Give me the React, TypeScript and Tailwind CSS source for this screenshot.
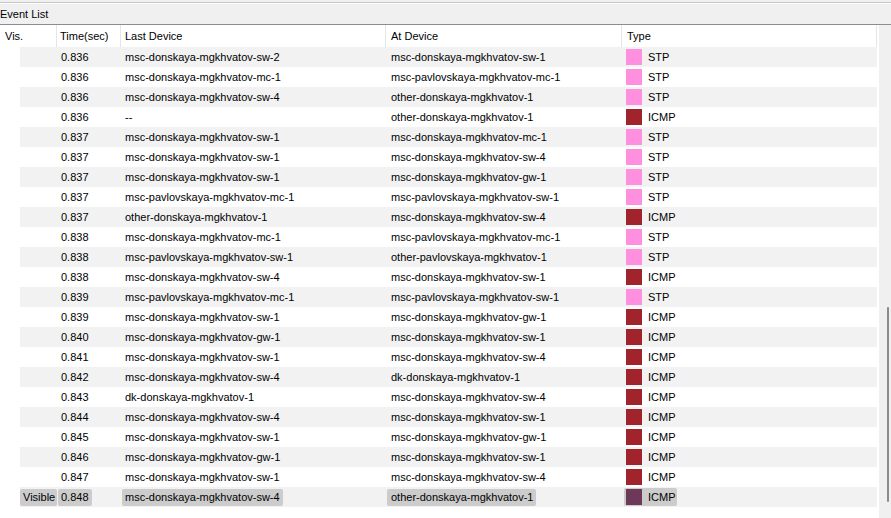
const rows = [
  ['0.836', 'msc-donskaya-mgkhvatov-sw-2', 'msc-donskaya-mgkhvatov-sw-1', 'STP'],
  ['0.836', 'msc-donskaya-mgkhvatov-mc-1', 'msc-pavlovskaya-mgkhvatov-mc-1', 'STP'],
  ['0.836', 'msc-donskaya-mgkhvatov-sw-4', 'other-donskaya-mgkhvatov-1', 'STP'],
  ['0.836', '--', 'other-donskaya-mgkhvatov-1', 'ICMP'],
  ['0.837', 'msc-donskaya-mgkhvatov-sw-1', 'msc-donskaya-mgkhvatov-mc-1', 'STP'],
  ['0.837', 'msc-donskaya-mgkhvatov-sw-1', 'msc-donskaya-mgkhvatov-sw-4', 'STP'],
  ['0.837', 'msc-donskaya-mgkhvatov-sw-1', 'msc-donskaya-mgkhvatov-gw-1', 'STP'],
  ['0.837', 'msc-pavlovskaya-mgkhvatov-mc-1', 'msc-pavlovskaya-mgkhvatov-sw-1', 'STP'],
  ['0.837', 'other-donskaya-mgkhvatov-1', 'msc-donskaya-mgkhvatov-sw-4', 'ICMP'],
  ['0.838', 'msc-donskaya-mgkhvatov-mc-1', 'msc-pavlovskaya-mgkhvatov-mc-1', 'STP'],
  ['0.838', 'msc-pavlovskaya-mgkhvatov-sw-1', 'other-pavlovskaya-mgkhvatov-1', 'STP'],
  ['0.838', 'msc-donskaya-mgkhvatov-sw-4', 'msc-donskaya-mgkhvatov-sw-1', 'ICMP'],
  ['0.839', 'msc-pavlovskaya-mgkhvatov-mc-1', 'msc-pavlovskaya-mgkhvatov-sw-1', 'STP'],
  ['0.839', 'msc-donskaya-mgkhvatov-sw-1', 'msc-donskaya-mgkhvatov-gw-1', 'ICMP'],
  ['0.840', 'msc-donskaya-mgkhvatov-gw-1', 'msc-donskaya-mgkhvatov-sw-1', 'ICMP'],
  ['0.841', 'msc-donskaya-mgkhvatov-sw-1', 'msc-donskaya-mgkhvatov-sw-4', 'ICMP'],
  ['0.842', 'msc-donskaya-mgkhvatov-sw-4', 'dk-donskaya-mgkhvatov-1', 'ICMP'],
  ['0.843', 'dk-donskaya-mgkhvatov-1', 'msc-donskaya-mgkhvatov-sw-4', 'ICMP'],
  ['0.844', 'msc-donskaya-mgkhvatov-sw-4', 'msc-donskaya-mgkhvatov-sw-1', 'ICMP'],
  ['0.845', 'msc-donskaya-mgkhvatov-sw-1', 'msc-donskaya-mgkhvatov-gw-1', 'ICMP'],
  ['0.846', 'msc-donskaya-mgkhvatov-gw-1', 'msc-donskaya-mgkhvatov-sw-1', 'ICMP'],
  ['0.847', 'msc-donskaya-mgkhvatov-sw-1', 'msc-donskaya-mgkhvatov-sw-4', 'ICMP'],
  ['0.848', 'msc-donskaya-mgkhvatov-sw-4', 'other-donskaya-mgkhvatov-1', 'ICMP'],
];

function Sel({ on, children }: { on: boolean; children: React.ReactNode }) {
  return (
    <span className={`inline-flex items-center h-[17px] px-[3px] rounded-[2px] ${on ? 'bg-[#cccccc]' : ''}`}>
      {children}
    </span>
  );
}

export default function App() {
  return (
    <div
      className="w-[891px] h-[518px] overflow-hidden bg-white text-[11px] text-black flex flex-col"
      style={{ fontFamily: '"Liberation Sans", Arial, sans-serif' }}
    >
      <div className="h-[2px] bg-[#f0f0f0]" />
      <div className="h-[1px] bg-[#c6c6c6]" />
      <div className="h-[1px] bg-white" />
      <div className="h-[20px] bg-[#f0f0f0] flex items-center border-b border-[#8a8d94] box-content">
        Event List
      </div>
      <div className="flex flex-1 min-h-0">
        <div className="w-[877px] flex flex-col">
          <div className="h-[22px] flex">
            <div className="w-[57px] pl-[5px] flex items-center border-r border-[#e5e5e5]">Vis.</div>
            <div className="w-[64px] pl-[3px] flex items-center border-r border-[#e5e5e5]">Time(sec)</div>
            <div className="w-[265px] pl-[4px] flex items-center border-r border-[#e5e5e5]">Last Device</div>
            <div className="w-[236px] pl-[5px] flex items-center border-r border-[#e5e5e5]">At Device</div>
            <div className="w-[255px] pl-[5px] flex items-center border-r border-[#e5e5e5]">Type</div>
          </div>
          {rows.map((r, i) => {
            const sel = i === rows.length - 1;
            const icmp = r[3] === 'ICMP';
            return (
              <div key={i} className="h-[20px] flex">
                <div className="w-[20px]" />
                <div className={`flex flex-1 items-center ${i % 2 === 0 ? 'bg-[#f2f2f2]' : ''}`}>
                  <div className="w-[37px] flex items-center">
                    {sel && (
                      <span className="inline-flex items-center h-[17px] w-[37px] pl-[3px] rounded-[2px] bg-[#cccccc]">
                        Visible
                      </span>
                    )}
                  </div>
                  <div className="w-[64px] pl-[1px] flex items-center">
                    <Sel on={sel}>{r[0]}</Sel>
                  </div>
                  <div className="w-[265px] pl-[1px] flex items-center">
                    <Sel on={sel}>{r[1]}</Sel>
                  </div>
                  <div className="w-[236px] pl-[1px] flex items-center">
                    <Sel on={sel}>
                      <span className="pl-[1px]">{r[2]}</span>
                    </Sel>
                  </div>
                  <div className="w-[255px] pl-[2px] flex items-center">
                    <span
                      className={`inline-flex items-center h-[18px] pl-[2px] pr-[1px] rounded-[2px] ${sel ? 'bg-[#cccccc]' : ''}`}
                    >
                      <span
                        className={`w-[16px] h-[16px] mr-[6px] ${sel ? 'bg-[#6e3859]' : icmp ? 'bg-[#a1232b]' : 'bg-[#ff8fdf]'}`}
                      />
                      {r[3]}
                    </span>
                  </div>
                </div>
              </div>
            );
          })}
        </div>
        <div className="w-[2px]" />
        <div className="w-[12px] bg-[#f0f0f0] pt-[282px] pl-[8px]">
          <div className="w-[2px] h-[195px] bg-[#8a8a8a] rounded-full" />
        </div>
      </div>
    </div>
  );
}
